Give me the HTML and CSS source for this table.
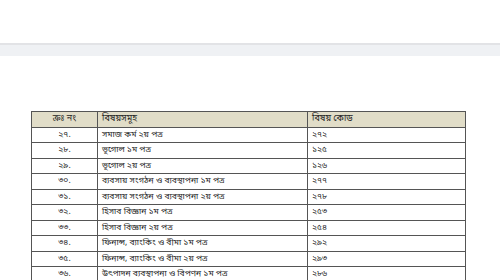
FILE: index.html
```html
<!DOCTYPE html>
<html lang="bn">
<head>
<meta charset="utf-8">
<title>বিষয় কোড</title>
<link rel="stylesheet" href="styles.css">
</head>
<body>
<header class="topbar"></header>
<div class="band"></div>
<main class="content">
  <table class="subjects">
    <colgroup><col class="w-no"><col class="w-name"><col class="w-code"></colgroup>
    <thead>
      <tr><th class="c-no">ক্রঃ নং</th><th>বিষয়সমূহ</th><th>বিষয় কোড</th></tr>
    </thead>
    <tbody>
      <tr><td class="c-no">২৭.</td><td>সমাজ কর্ম ২য় পত্র</td><td>২৭২</td></tr>
      <tr><td class="c-no">২৮.</td><td>ভূগোল ১ম পত্র</td><td>১২৫</td></tr>
      <tr><td class="c-no">২৯.</td><td>ভূগোল ২য় পত্র</td><td>১২৬</td></tr>
      <tr><td class="c-no">৩০.</td><td>ব্যবসায় সংগঠন ও ব্যবস্থাপনা ১ম পত্র</td><td>২৭৭</td></tr>
      <tr><td class="c-no">৩১.</td><td>ব্যবসায় সংগঠন ও ব্যবস্থাপনা ২য় পত্র</td><td>২৭৮</td></tr>
      <tr><td class="c-no">৩২.</td><td>হিসাব বিজ্ঞান ১ম পত্র</td><td>২৫৩</td></tr>
      <tr><td class="c-no">৩৩.</td><td>হিসাব বিজ্ঞান ২য় পত্র</td><td>২৫৪</td></tr>
      <tr><td class="c-no">৩৪.</td><td>ফিনান্স, ব্যাংকিং ও বীমা ১ম পত্র</td><td>২৯২</td></tr>
      <tr><td class="c-no">৩৫.</td><td>ফিনান্স, ব্যাংকিং ও বীমা ২য় পত্র</td><td>২৯৩</td></tr>
      <tr><td class="c-no">৩৬.</td><td>উৎপাদন ব্যবস্থাপনা ও বিপণন ১ম পত্র</td><td>২৮৬</td></tr>
    </tbody>
  </table>
</main>
</body>
</html>
```
FILE: styles.css
```css
html, body {
  margin: 0;
  padding: 0;
  background: #ffffff;
}
body {
  font-family: "Noto Sans Bengali", "Noto Sans", "DejaVu Sans", sans-serif;
  color: #262626;
  overflow: hidden;
}
.topbar {
  height: 43px;
  background: #ffffff;
  border-bottom: 2px solid #e2e3e6;
}
.band {
  height: 11px;
  background: #eff1f4;
}
.content {
  padding: 55px 0 0 31px;
}
.subjects {
  border-collapse: collapse;
  width: 434px;
  table-layout: fixed;
  font-size: 8.5px;
  line-height: 1;
}
.w-no { width: 66px; }
.w-name { width: 210px; }
.w-code { width: 158px; }
.subjects th,
.subjects td {
  border: 1px solid #555555;
  padding: 0 0 0 4px;
  text-align: left;
  font-weight: normal;
  vertical-align: middle;
  white-space: nowrap;
  overflow: hidden;
}
.subjects th {
  height: 14.5px;
  background: #e1ddc8;
  font-size: 9px;
}
.subjects td {
  height: 14.5px;
}
.subjects .c-no {
  text-align: center;
  padding-left: 0;
}
```
